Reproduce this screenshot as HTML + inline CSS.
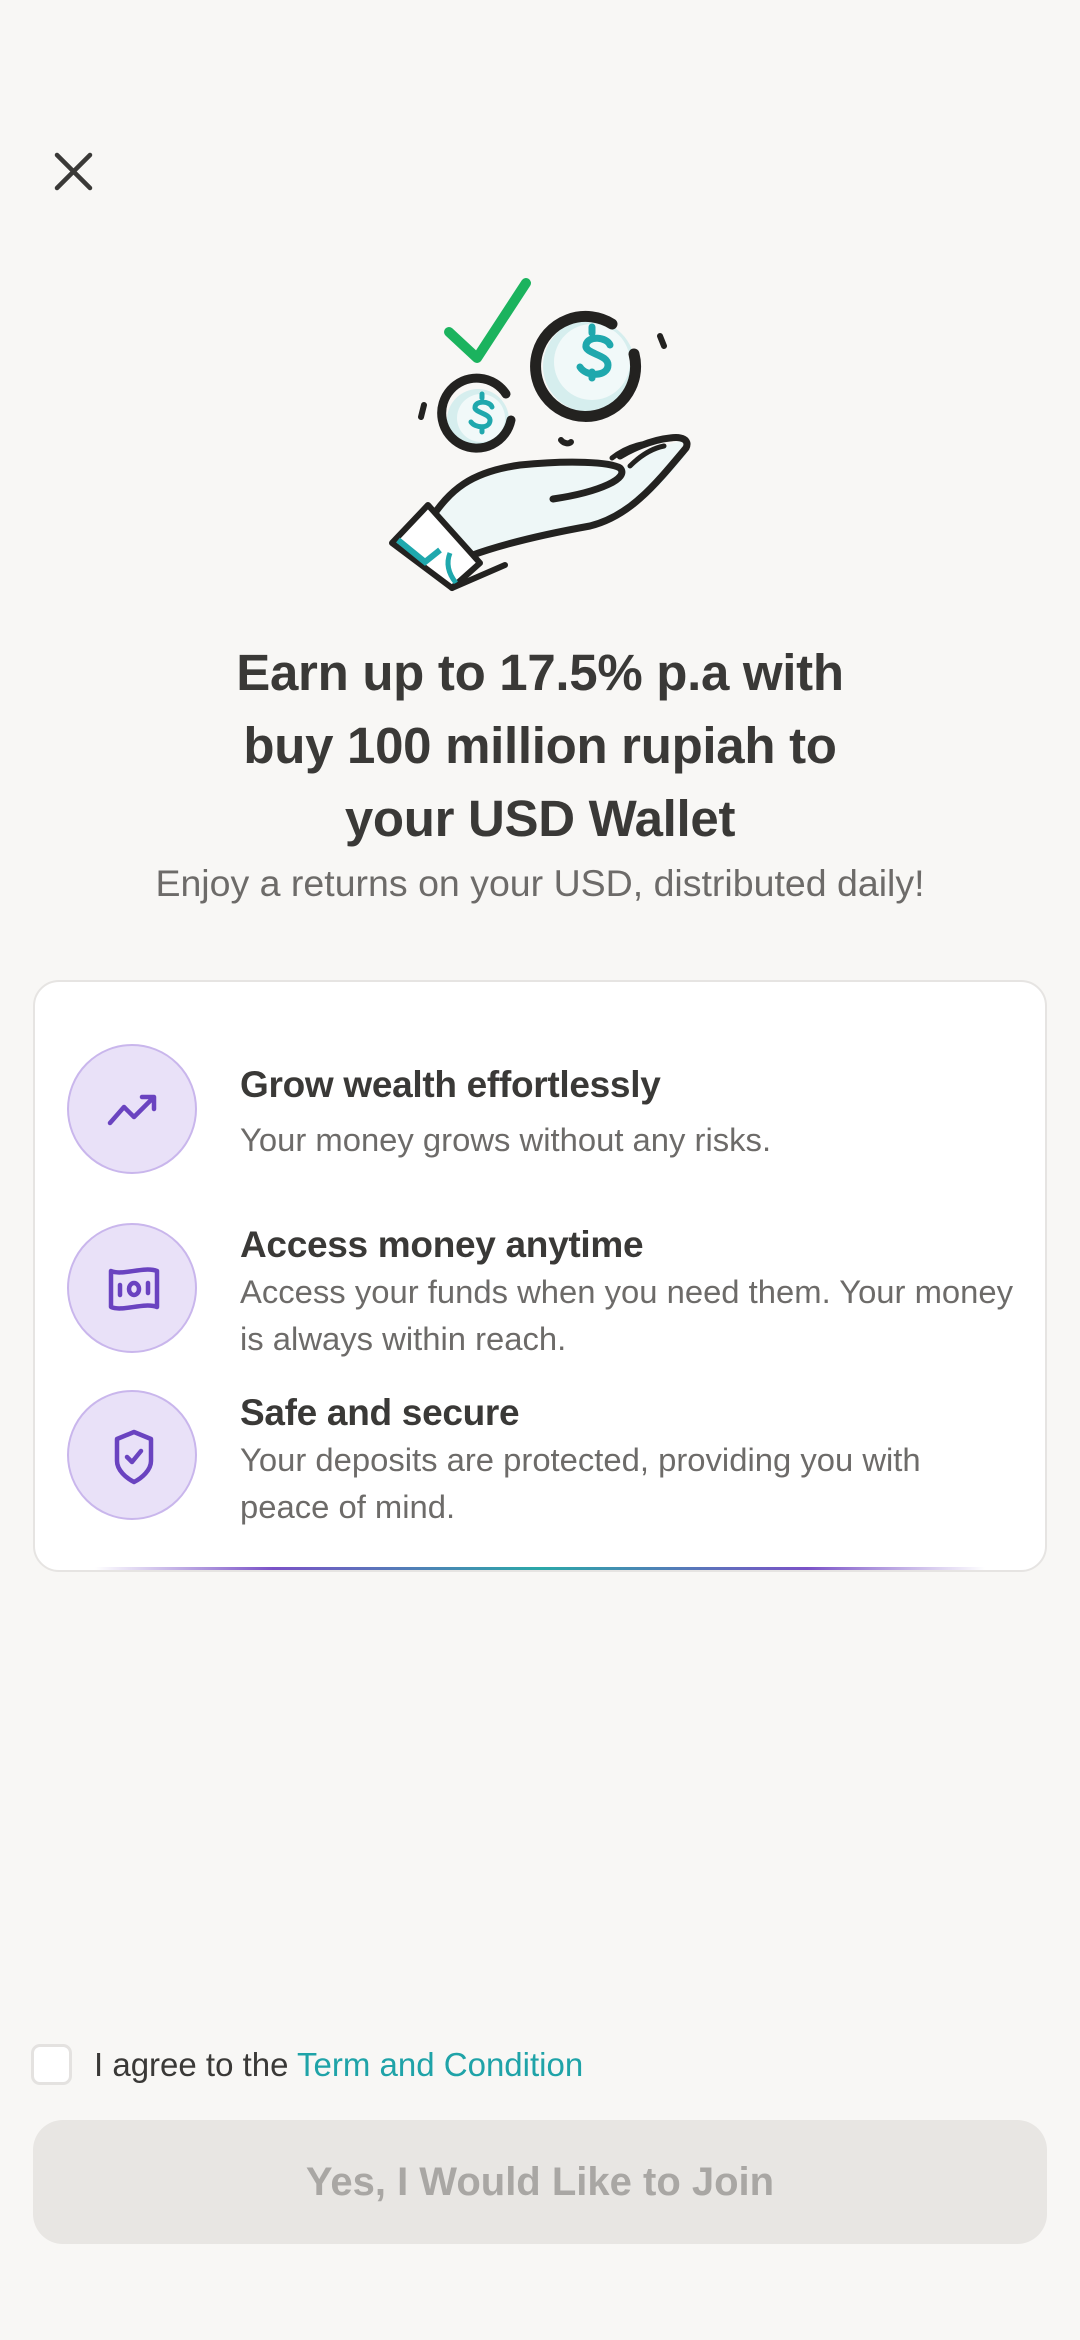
<!DOCTYPE html>
<html><head><meta charset="utf-8">
<style>
*{margin:0;padding:0;box-sizing:border-box}
html,body{width:1080px;height:2340px;background:#f8f7f5;font-family:"Liberation Sans",sans-serif;overflow:hidden}
.abs{position:absolute}
.title{left:0;width:1080px;top:636px;text-align:center;font-weight:bold;font-size:51px;line-height:73px;color:#3a3937;letter-spacing:-0.3px}
.sub{left:0;width:1080px;top:862px;text-align:center;font-size:37.5px;color:#6d6b69}
.card{left:33px;top:980px;width:1014px;height:592px;background:#fff;border:2px solid #e6e4e2;border-radius:26px;overflow:hidden}
.card:after{content:"";position:absolute;left:60px;right:60px;bottom:0;height:3px;background:linear-gradient(90deg,#fff,#7a52c7 20%,#2aa8a8 50%,#7a52c7 80%,#fff)}
.ic{width:130px;height:130px;border-radius:50%;background:#e9e1f8;border:2px solid #c9b6ec;left:32px}
.ic svg{position:absolute;left:33px;top:33px}
.h{left:205px;font-size:37px;font-weight:bold;color:#3a3937;letter-spacing:-0.3px}
.d{left:205px;font-size:32.8px;line-height:47px;color:#6d6b69;width:840px;white-space:nowrap}
.btn{left:33px;top:2120px;width:1014px;height:124px;border-radius:30px;background:#e8e6e3;color:#a9a7a4;font-weight:bold;font-size:40px;text-align:center;line-height:124px}
</style></head><body>
<svg class="abs" style="left:0;top:0" width="1080" height="700">
<path d="M57 155L90 188M90 155L57 188" stroke="#3a3937" stroke-width="4.5" stroke-linecap="round"/>
<path d="M449 332L477 358L526 283" fill="none" stroke="#1bb35e" stroke-width="10" stroke-linecap="round" stroke-linejoin="round"/>
<circle cx="589" cy="366" r="46" fill="#d6eeee"/>
<circle cx="592" cy="362" r="38" fill="#f1f9f9"/>
<path d="M612 324 A50 50 0 1 0 634 354" fill="none" stroke="#232220" stroke-width="11" stroke-linecap="round"/>
<path d="M610 345c-3-8-22-10-24 0c-2 9 22 9 22 20c0 12-22 12-28 2M592 333v-6M592 378v-6" fill="none" stroke="#1fa8ad" stroke-width="7" stroke-linecap="round"/>
<circle cx="478" cy="420" r="31" fill="#d6eeee"/>
<circle cx="481" cy="418" r="24" fill="#f1f9f9"/>
<path d="M506 394 A35 35 0 1 0 511 420" fill="none" stroke="#232220" stroke-width="9" stroke-linecap="round"/>
<path d="M492 407c-2-6-16-7-17 0c-1 6 16 6 15 14c-1 8-15 7-19 1M482 398v-4M482 432v-4" fill="none" stroke="#1fa8ad" stroke-width="5" stroke-linecap="round"/>
<path d="M660 336l4 10M424 405l-3 12M561 440c3 4 8 4 10 2" stroke="#232220" stroke-width="6" stroke-linecap="round" fill="none"/>
<!-- hand -->
<path d="M430 520C450 490 470 470 520 465C570 462 610 462 622 470C630 480 600 495 555 499C600 490 640 450 684 440C692 440 690 452 680 462C650 500 620 520 590 525C550 532 500 545 470 555Z" fill="#eef7f7"/>
<path d="M430 520C450 490 470 472 520 465C570 460 610 462 620 468C630 478 600 492 553 499" fill="none" stroke="#232220" stroke-width="7" stroke-linecap="round"/>
<path d="M470 556C500 545 540 535 590 526C630 516 655 485 686 448C690 440 682 436 670 438C650 440 630 450 620 456" fill="none" stroke="#232220" stroke-width="7" stroke-linecap="round"/>
<path d="M612 458c10-8 20-12 30-14M630 466c12-12 24-18 34-20" stroke="#232220" stroke-width="5" fill="none" stroke-linecap="round"/>
<path d="M392 543L428 505L480 563L452 588Z" fill="#fff" stroke="#232220" stroke-width="6" stroke-linejoin="round"/>
<path d="M398 540L425 562L440 550" fill="none" stroke="#1fa8ad" stroke-width="6"/>
<path d="M450 553c-4 10-2 20 6 30" fill="none" stroke="#1fa8ad" stroke-width="5"/>
<path d="M452 588L505 565" stroke="#232220" stroke-width="6" stroke-linecap="round"/>
</svg>
<div class="abs title">Earn up to 17.5% p.a with<br>buy 100 million rupiah to<br>your USD Wallet</div>
<div class="abs sub">Enjoy a returns on your USD, distributed daily!</div>
<div class="abs card">
 <div class="abs ic" style="top:62px"><svg width="64" height="64" viewBox="0 0 64 64"><path d="M8 44L22 28L32 38L52 18M40 18H52V30" fill="none" stroke="#6a43c0" stroke-width="4.5" stroke-linecap="round" stroke-linejoin="round"/></svg></div>
 <div class="abs ic" style="top:241px"><svg width="64" height="64" viewBox="0 0 64 64"><path d="M9 13C20 18 42 8 55 13V49C42 44 20 54 9 49Z" fill="none" stroke="#6a43c0" stroke-width="4.5" stroke-linejoin="round"/><path d="M18 27V37M46 25V35" stroke="#6a43c0" stroke-width="4.5" stroke-linecap="round"/><ellipse cx="32" cy="31" rx="5" ry="6" fill="none" stroke="#6a43c0" stroke-width="4.5"/></svg></div>
 <div class="abs ic" style="top:408px"><svg width="64" height="64" viewBox="0 0 64 64"><path d="M32 7L49 14V36C49 45 40 53 32 57C24 53 15 45 15 36V14Z" fill="none" stroke="#6a43c0" stroke-width="4.5" stroke-linejoin="round"/><path d="M25 32L30 37L39 26" fill="none" stroke="#6a43c0" stroke-width="4.5" stroke-linecap="round" stroke-linejoin="round"/></svg></div>
 <div class="abs h" style="top:82px">Grow wealth effortlessly</div>
 <div class="abs d" style="top:134px">Your money grows without any risks.</div>
 <div class="abs h" style="top:242px">Access money anytime</div>
 <div class="abs d" style="top:286px">Access your funds when you need them. Your money<br>is always within reach.</div>
 <div class="abs h" style="top:410px">Safe and secure</div>
 <div class="abs d" style="top:454px">Your deposits are protected, providing you with<br>peace of mind.</div>
</div>
<div class="abs" style="left:31px;top:2044px;width:41px;height:41px;border:3px solid #e4e2e0;border-radius:9px;background:#fff"></div>
<div class="abs" style="left:94px;top:2046px;font-size:33px;color:#3a3937">I agree to the <span style="color:#1fa3a8">Term and Condition</span></div>
<div class="abs btn">Yes, I Would Like to Join</div>
</body></html>
